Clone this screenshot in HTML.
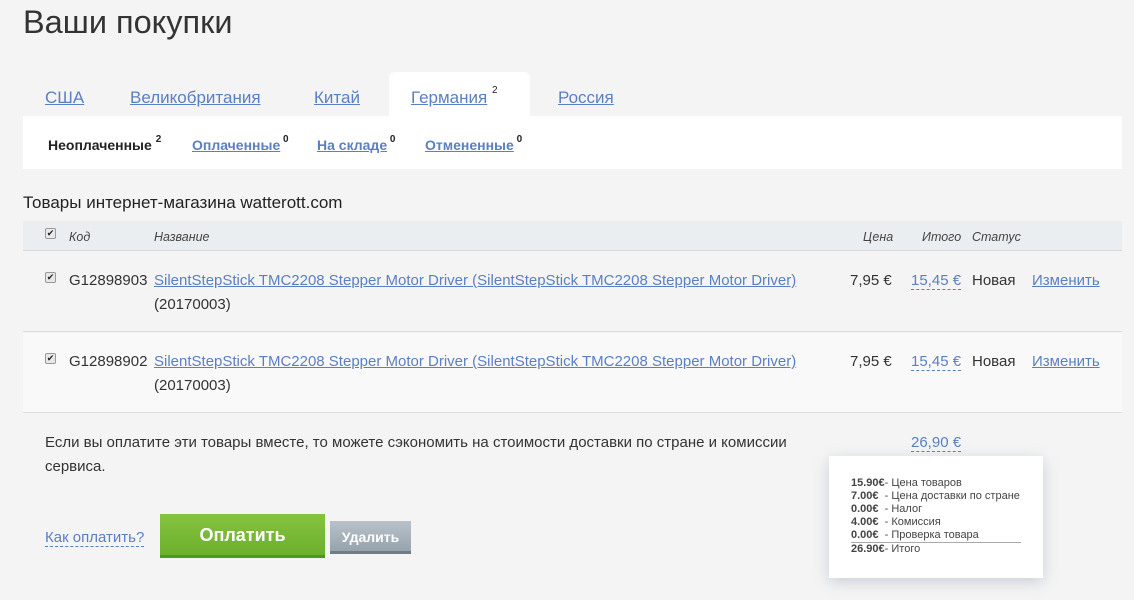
<!DOCTYPE html>
<html><head><meta charset="utf-8"><style>
*{margin:0;padding:0;box-sizing:border-box}
body{width:1134px;height:600px;background:#f4f4f4;font-family:"Liberation Sans","DejaVu Sans",sans-serif;color:#333;position:relative;overflow:hidden;font-size:15px}
.a{position:absolute;white-space:nowrap}
a,.l{color:#5a7fc2;text-decoration:underline}
.d{color:#5a7fc2;border-bottom:1px dashed #5a7fc2;text-decoration:none}
sup{font-size:10px;position:relative;top:-3px;vertical-align:top;color:#222}
.cb{position:absolute;width:11px;height:11px;border:1px solid #999;background:#e8e8e8;border-radius:2px;font-size:9px;line-height:9px;text-align:center;color:#222}
.h{font-style:italic;font-size:12.5px;color:#444}
</style></head><body>
<div class="a" style="left:23px;top:4px;font-size:32.5px;color:#333">Ваши покупки</div>
<div class="a" style="left:389px;top:72px;width:141px;height:44px;background:#fff;border-radius:6px 6px 0 0"></div>
<div class="a" style="left:45px;top:88px;font-size:17px"><a>США</a></div>
<div class="a" style="left:130px;top:88px;font-size:17px"><a>Великобритания</a></div>
<div class="a" style="left:314px;top:88px;font-size:17px"><a>Китай</a></div>
<div class="a" style="left:411px;top:88px;font-size:17px"><a>Германия</a> <sup>2</sup></div>
<div class="a" style="left:558px;top:88px;font-size:17px"><a>Россия</a></div>
<div class="a" style="left:23px;top:116px;width:1099px;height:53px;background:#fff"></div>
<div class="a" style="left:48px;top:137px;font-size:14px;font-weight:bold;color:#222">Неоплаченные <sup>2</sup></div>
<div class="a" style="left:192px;top:137px;font-size:14px;font-weight:bold"><a>Оплаченные</a><sup> 0</sup></div>
<div class="a" style="left:317px;top:137px;font-size:14px;font-weight:bold"><a>На складе</a><sup> 0</sup></div>
<div class="a" style="left:425px;top:137px;font-size:14px;font-weight:bold"><a>Отмененные</a><sup> 0</sup></div>
<div class="a" style="left:23px;top:193px;font-size:17px;color:#222">Товары интернет-магазина watterott.com</div>
<div class="a" style="left:23px;top:221px;width:1099px;height:30px;background:#ebeef0;border-bottom:1px solid #d8d8d8"></div>
<div class="cb" style="left:45px;top:228px">✔</div>
<div class="a h" style="left:69px;top:230px">Код</div>
<div class="a h" style="left:154px;top:230px">Название</div>
<div class="a h" style="left:863px;top:230px">Цена</div>
<div class="a h" style="left:922px;top:230px">Итого</div>
<div class="a h" style="left:972px;top:230px">Статус</div>
<div class="a" style="left:23px;top:252px;width:1099px;height:80px;background:#f4f4f4;border-bottom:1px solid #dcdcdc"></div>
<div class="a" style="left:23px;top:333px;width:1099px;height:80px;background:#f9f9f9;border-bottom:1px solid #dcdcdc"></div>
<div class="cb" style="left:45px;top:272px">✔</div>
<div class="a" style="left:69px;top:272px">G12898903</div>
<div class="a" style="left:154px;top:272px"><a>SilentStepStick TMC2208 Stepper Motor Driver (SilentStepStick TMC2208 Stepper Motor Driver)</a></div>
<div class="a" style="left:154px;top:296px">(20170003)</div>
<div class="a" style="left:850px;top:272px">7,95 €</div>
<div class="a" style="left:911px;top:272px"><span class="d">15,45 €</span></div>
<div class="a" style="left:972px;top:272px">Новая</div>
<div class="a" style="left:1032px;top:272px"><a>Изменить</a></div>
<div class="cb" style="left:45px;top:353px">✔</div>
<div class="a" style="left:69px;top:353px">G12898902</div>
<div class="a" style="left:154px;top:353px"><a>SilentStepStick TMC2208 Stepper Motor Driver (SilentStepStick TMC2208 Stepper Motor Driver)</a></div>
<div class="a" style="left:154px;top:377px">(20170003)</div>
<div class="a" style="left:850px;top:353px">7,95 €</div>
<div class="a" style="left:911px;top:353px"><span class="d">15,45 €</span></div>
<div class="a" style="left:972px;top:353px">Новая</div>
<div class="a" style="left:1032px;top:353px"><a>Изменить</a></div>
<div class="a" style="left:45px;top:434px">Если вы оплатите эти товары вместе, то можете сэкономить на стоимости доставки по стране и комиссии</div>
<div class="a" style="left:45px;top:458px">сервиса.</div>
<div class="a" style="left:911px;top:434px"><span class="d">26,90 €</span></div>
<div class="a" style="left:829px;top:456px;width:214px;height:122px;background:#fff;box-shadow:0 4px 14px rgba(120,140,170,.35);font-family:'Liberation Sans',sans-serif;font-size:11px;line-height:13px;color:#444;padding:21px 0 0 22px;white-space:nowrap">
<div><b>15.90€</b>- Цена товаров</div>
<div><b>7.00€</b> &nbsp;- Цена доставки по стране</div>
<div><b>0.00€</b> &nbsp;- Налог</div>
<div><b>4.00€</b> &nbsp;- Комиссия</div>
<div style="border-bottom:1px solid #aaa;width:170px"><b>0.00€</b> &nbsp;- Проверка товара</div>
<div><b>26.90€</b>- Итого</div>
</div>
<div class="a" style="left:45px;top:529px;font-size:15px"><span class="d">Как оплатить?</span></div>
<div class="a" style="left:160px;top:514px;width:165px;height:44px;background:linear-gradient(#86c240,#6cb02c);border-bottom:3px solid #4a9a1e;color:#fff;font-weight:bold;font-size:18px;text-align:center;line-height:42px">Оплатить</div>
<div class="a" style="left:330px;top:521px;width:81px;height:33px;background:linear-gradient(#b8c2ca,#97a3ad);border-bottom:3px solid #707c86;color:#fff;font-weight:bold;font-size:14px;text-align:center;line-height:32px">Удалить</div>
</body></html>
